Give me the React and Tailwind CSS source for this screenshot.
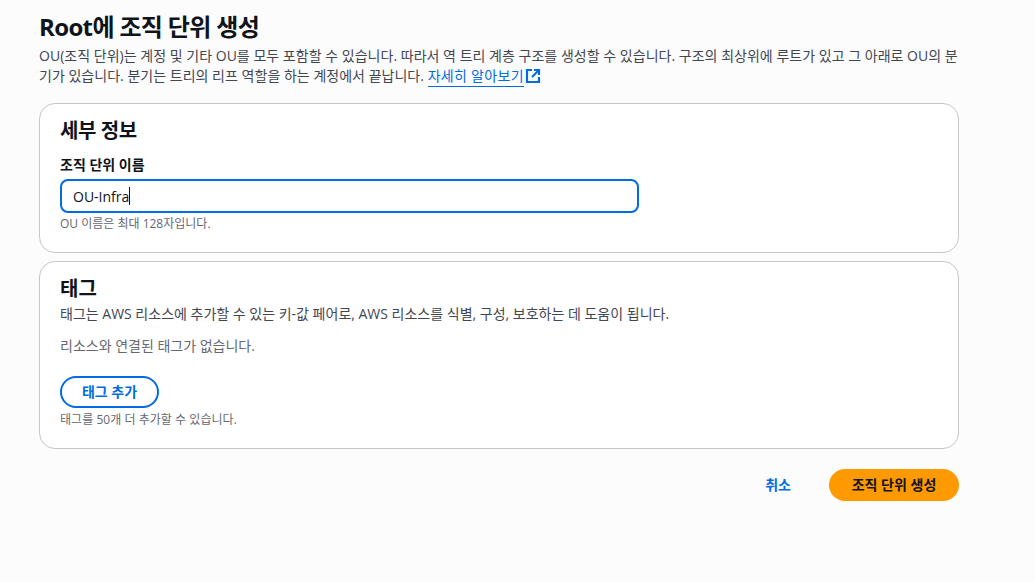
const fontStack = { fontFamily: '"Open Sans", "Noto Sans CJK KR", sans-serif' };

function ExternalIcon() {
  return (
    <svg viewBox="0 0 16 16" className="inline-block w-[16px] h-[16px] ml-[1px] align-[-3px]" fill="none" stroke="#006ce0" strokeWidth="2.2">
      <path d="M14 9v5H2V2h5" />
      <path d="M9 2h5v5" />
      <path d="M14 2 7 9" />
    </svg>
  );
}

export default function App() {
  return (
    <div className="min-h-[582px] bg-[#fcfcfd] text-[#0f141a] overflow-hidden" style={fontStack}>
      <div className="w-[920px] ml-[39px] pt-[12px]">
        <h1 className="text-[24px] leading-[30px] font-bold tracking-[-0.65px]">Root에 조직 단위 생성</h1>
        <p className="mt-[4px] text-[14px] leading-[20px] text-[#424650] tracking-[0.02px]">
          OU(조직 단위)는 계정 및 기타 OU를 모두 포함할 수 있습니다. 따라서 역 트리 계층 구조를 생성할 수 있습니다. 구조의 최상위에 루트가 있고 그 아래로 OU의 분기가 있습니다. 분기는 트리의 리프 역할을 하는 계정에서 끝납니다.{' '}
          <a className="text-[#006ce0] border-b border-[#006ce0] pb-[1px] tracking-[0.3px]">자세히 알아보기</a>
          <ExternalIcon />
        </p>

        <section className="mt-[17px] h-[150px] rounded-[16px] border border-[#c6c6cd] bg-white px-[20px] pt-[13px]">
          <h2 className="text-[20px] leading-[28px] font-bold tracking-[-0.4px]">세부 정보</h2>
          <label className="block mt-[11px] text-[14px] leading-[18px] font-bold">조직 단위 이름</label>
          <div className="mt-[5px] w-[579px] h-[34px] rounded-[8px] border-2 border-[#006ce0] bg-white pl-[11px] flex items-center text-[14px]">
            <span>OU-Infra</span>
            <span className="w-px h-[18px] bg-[#0f141a]" />
          </div>
          <p className="mt-[3px] text-[12px] leading-[16px] text-[#656871]">OU 이름은 최대 128자입니다.</p>
        </section>

        <section className="mt-[8px] h-[188px] rounded-[16px] border border-[#c6c6cd] bg-white px-[20px] pt-[13px]">
          <h2 className="text-[20px] leading-[28px] font-bold">태그</h2>
          <p className="mt-[1px] text-[14px] leading-[20px] text-[#424650]">태그는 AWS 리소스에 추가할 수 있는 키-값 페어로, AWS 리소스를 식별, 구성, 보호하는 데 도움이 됩니다.</p>
          <p className="mt-[12px] text-[14px] leading-[20px] text-[#656871]">리소스와 연결된 태그가 없습니다.</p>
          <button className="block mt-[20px] w-[99px] h-[32px] pb-[1px] rounded-full border-2 border-[#006ce0] bg-white text-[14px] font-bold text-[#006ce0]">태그 추가</button>
          <p className="mt-[4px] text-[12px] leading-[16px] text-[#656871] tracking-[0.04px]">태그를 50개 더 추가할 수 있습니다.</p>
        </section>

        <div className="mt-[20px] flex justify-end items-center">
          <button className="pb-[2px] text-[14px] font-bold text-[#006ce0] mr-[38px]">취소</button>
          <button className="w-[130px] h-[32px] pb-[1px] rounded-full bg-[#ff9900] text-[14px] font-bold text-[#0f141a]">조직 단위 생성</button>
        </div>
      </div>
    </div>
  );
}
